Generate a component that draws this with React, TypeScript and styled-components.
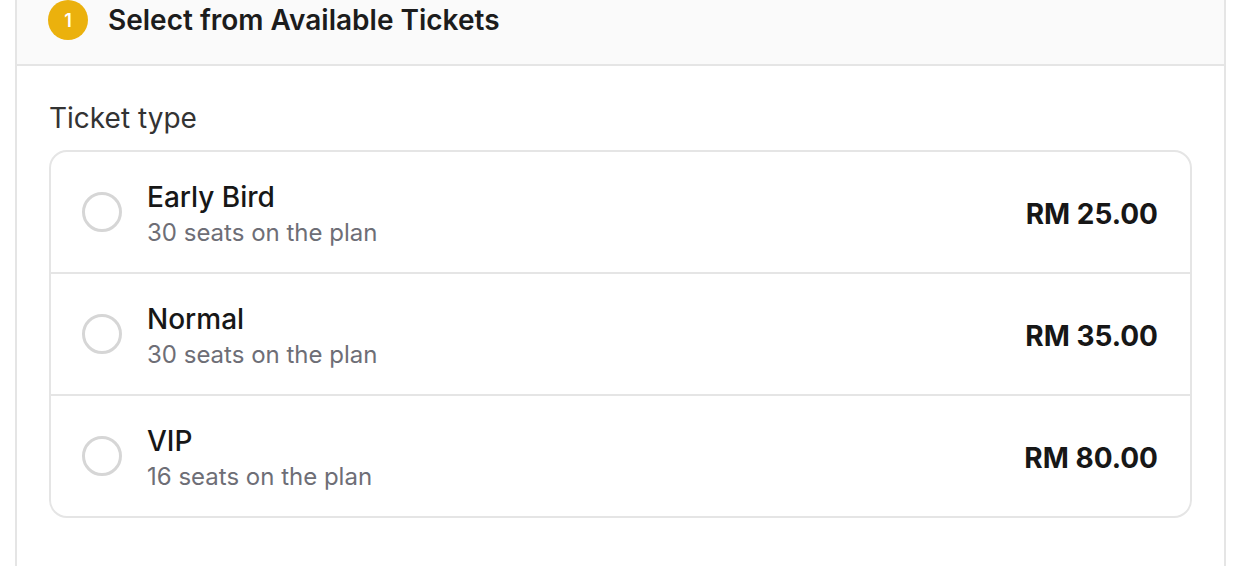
import React from 'react'
import styled, { createGlobalStyle } from 'styled-components'

const Global = createGlobalStyle`
  body {
    margin: 0;
    background: #ffffff;
    font-family: Inter, "Noto Sans", sans-serif;
    color: #171717;
  }
`

const Card = styled.section`
  margin-left: 15px;
  width: 1211px;
  height: 566px;
  border: 2px solid #e5e5e5;
  border-top: none;
  border-bottom: none;
  box-sizing: border-box;
  overflow: hidden;
`

const Header = styled.header`
  display: flex;
  align-items: center;
  gap: 20px;
  padding: 0 31px 24px;
  background: #fafafa;
  border-bottom: 2px solid #e5e5e5;
`

const StepBadge = styled.span`
  display: flex;
  align-items: center;
  justify-content: center;
  width: 40px;
  height: 40px;
  border-radius: 50%;
  background: #ebb10d;
  color: #ffffff;
  font-size: 18px;
  font-weight: 600;
`

const Title = styled.h2`
  margin: 0;
  font-size: 28px;
  font-weight: 600;
  color: #1c1c1c;
`

const Body = styled.div`
  padding: 34px 32px 0 32px;
`

const Label = styled.div`
  font-size: 28px;
  line-height: 36px;
  color: #333333;
  margin-bottom: 14px;
`

const List = styled.div`
  border: 2px solid #e5e5e5;
  border-radius: 18px;
  overflow: hidden;
`

const Row = styled.label`
  display: flex;
  align-items: center;
  height: 120px;
  padding: 0 32px 0 31px;
  & + & {
    border-top: 2px solid #e5e5e5;
  }
`

const Radio = styled.span`
  width: 40px;
  height: 40px;
  box-sizing: border-box;
  border: 3px solid #d6d6d6;
  border-radius: 50%;
  flex-shrink: 0;
`

const Info = styled.div`
  display: flex;
  flex-direction: column;
  gap: 2px;
  padding-top: 3px;
  margin-left: 25px;
  flex: 1;
`

const Name = styled.span`
  font-size: 28px;
  font-weight: 500;
  line-height: 36px;
  color: #171717;
`

const Seats = styled.span`
  font-size: 24px;
  line-height: 32px;
  color: #6e6e76;
`

const Price = styled.span`
  font-size: 28px;
  font-weight: 700;
  color: #171717;
  margin-top: 4px;
`

const tickets = [
  { name: 'Early Bird', seats: 30, price: '25.00' },
  { name: 'Normal', seats: 30, price: '35.00' },
  { name: 'VIP', seats: 16, price: '80.00' },
]

export default function App() {
  return (
    <>
      <Global />
      <Card>
        <Header>
          <StepBadge>1</StepBadge>
          <Title>Select from Available Tickets</Title>
        </Header>
        <Body>
          <Label>Ticket type</Label>
          <List>
            {tickets.map(t => (
              <Row key={t.name}>
                <Radio />
                <Info>
                  <Name>{t.name}</Name>
                  <Seats>{t.seats} seats on the plan</Seats>
                </Info>
                <Price>RM {t.price}</Price>
              </Row>
            ))}
          </List>
        </Body>
      </Card>
    </>
  )
}
